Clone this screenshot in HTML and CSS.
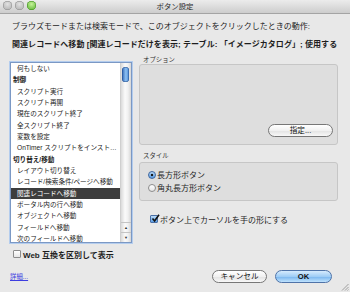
FILE: index.html
```html
<!DOCTYPE html>
<html lang="ja">
<head>
    <meta charset="UTF-8">
    <meta name="viewport" content="width=device-width, initial-scale=1.0">
    <title>ボタン設定</title>
    <link rel="stylesheet" href="styles.css">
</head>
<body>
    <div class="window">
        <div class="titlebar">
            <div class="lights">
                <span class="light"></span>
                <span class="light"></span>
                <span class="light green"></span>
            </div>
            <div class="title">ボタン設定</div>
        </div>

        <div class="content">
            <p class="prompt">ブラウズモードまたは検索モードで、このオブジェクトをクリックしたときの動作:</p>
            <p class="action">関連レコードへ移動 [関連レコードだけを表示; テーブル: 「イメージカタログ」; 使用する</p>

            <div class="main">
                <div class="left">
                    <div class="list">
                        <ul class="items">
                            <li>何もしない</li>
                            <li class="group">制御</li>
                            <li>スクリプト実行</li>
                            <li>スクリプト再開</li>
                            <li>現在のスクリプト終了</li>
                            <li>全スクリプト終了</li>
                            <li>変数を設定</li>
                            <li>OnTimer スクリプトをインスト…</li>
                            <li class="group">切り替え/移動</li>
                            <li>レイアウト切り替え</li>
                            <li>レコード/検索条件/ページへ移動</li>
                            <li class="selected">関連レコードへ移動</li>
                            <li>ポータル内の行へ移動</li>
                            <li>オブジェクトへ移動</li>
                            <li>フィールドへ移動</li>
                            <li>次のフィールドへ移動</li>
                        </ul>
                        <div class="scrollbar">
                            <div class="track"><div class="thumb"></div></div>
                            <div class="arrow up">▲</div>
                            <div class="arrow down">▼</div>
                        </div>
                    </div>
                    <div class="check web"><span class="box"></span>Web 互換を区別して表示</div>
                </div>

                <div class="right">
                    <div class="group-label">オプション</div>
                    <div class="panel options">
                        <button class="btn">指定...</button>
                    </div>
                    <div class="group-label style-label">スタイル</div>
                    <div class="panel style">
                        <div class="radio on"><span class="dot"></span>長方形ボタン</div>
                        <div class="radio"><span class="dot"></span>角丸長方形ボタン</div>
                    </div>
                    <div class="check cursor">
                        <span class="box checked">
                            <svg width="9" height="9" viewBox="0 0 9 9"><path d="M1.5 4.5 L3.6 7 L8 0.8" fill="none" stroke="#111" stroke-width="1.6"/></svg>
                        </span>ボタン上でカーソルを手の形にする
                    </div>
                </div>
            </div>

            <div class="footer">
                <a class="more" href="#">詳細...</a>
                <div class="buttons">
                    <button class="btn cancel">キャンセル</button>
                    <button class="btn default">OK</button>
                </div>
            </div>
        </div>

        <svg class="grip" width="8" height="8" viewBox="0 0 8 8">
            <path d="M7.5 1 L1 7.5 M7.5 4 L4 7.5 M7.5 6.5 L6.5 7.5" stroke="#8a8a8a" stroke-width="0.8"/>
        </svg>
    </div>
</body>
</html>
```

FILE: styles.css
```css
body {
    margin: 0;
    font-family: "Liberation Sans", "Noto Sans CJK JP", sans-serif;
    color: #1e1e1e;
    background: #e8e8e8;
}
.window {
    position: relative;
    width: 350px;
    height: 292px;
    background: #e8e8e8;
    overflow: hidden;
}
.titlebar {
    position: relative;
    height: 14px;
    background: linear-gradient(#ececec, #cdcdcd);
    border-bottom: 1px solid #a4a4a4;
    box-sizing: border-box;
}
.lights {
    display: flex;
    gap: 3px;
    padding: 1px 0 0 3px;
}
.light {
    width: 9px;
    height: 9px;
    border-radius: 50%;
    background: radial-gradient(circle at 50% 35%, #e2e2e2, #a9a9a9);
    box-shadow: inset 0 0 0 0.5px #8c8c8c;
}
.light.green {
    background: radial-gradient(circle at 50% 35%, #c6f29a, #4fae25);
    box-shadow: inset 0 0 0 0.5px #3d8a1c;
}
.title {
    position: absolute;
    top: 0;
    left: 0;
    right: 0;
    text-align: center;
    font-size: 7.4px;
    line-height: 13px;
    color: #2a2a2a;
}
.content {
    padding: 0 12px 0 10px;
}
.prompt {
    margin: 8px 0 0 2px;
    font-size: 8px;
    line-height: 10px;
    white-space: nowrap;
}
.action {
    margin: 8px 0 0 2px;
    font-size: 8px;
    line-height: 10px;
    font-weight: bold;
    white-space: nowrap;
    letter-spacing: 0.05px;
}
.main {
    display: flex;
    gap: 7px;
    margin-top: 6px;
    height: 204px;
}
.left {
    width: 122px;
}
.list {
    display: flex;
    margin-top: 6px;
    height: 181px;
    box-sizing: border-box;
    background: white;
    border: 1px solid #7b98c4;
    box-shadow: 0 0 0 1px #b4cdee;
}
.items {
    flex: 1;
    margin: 0;
    padding: 0;
    list-style: none;
    overflow: hidden;
}
.items li {
    height: 11.33px;
    line-height: 11.33px;
    padding-left: 6px;
    font-size: 6.6px;
    white-space: nowrap;
    overflow: hidden;
    color: #222;
}
.items li.group {
    padding-left: 2px;
    font-weight: bold;
}
.items li.selected {
    background: #3d3d3d;
    color: white;
}
.scrollbar {
    width: 10px;
    display: flex;
    flex-direction: column;
    border-left: 1px solid #cfcfcf;
    background: linear-gradient(to right, #dadada, #fafafa 40%, #f0f0f0 70%, #d6d6d6);
}
.track {
    flex: 1;
    padding: 4px 0 0 1px;
}
.thumb {
    width: 7px;
    height: 15px;
    border-radius: 4px;
    background: linear-gradient(to right, #2f62b3, #8ec2f3 55%, #4a86d4);
    box-shadow: inset 0 0 0 0.5px #24508f;
}
.arrow {
    height: 9px;
    font-size: 4px;
    line-height: 9px;
    text-align: center;
    color: #333;
    border-top: 1px solid #c4c4c4;
}
.check {
    display: flex;
    align-items: center;
    gap: 2px;
    height: 12px;
    font-size: 8px;
}
.check.web {
    margin-top: 5px;
    padding-left: 3px;
    font-weight: bold;
}
.box {
    width: 8px;
    height: 8px;
    box-sizing: border-box;
    border: 1px solid #8c8c8c;
    border-radius: 1px;
    background: linear-gradient(white, #e6e6e6);
    position: relative;
}
.box.checked {
    border-color: #4a6fa6;
    background: linear-gradient(#bcdcf8, #5a9ee6);
}
.box svg {
    position: absolute;
    left: 0;
    top: -2px;
}
.right {
    width: 199px;
}
.group-label {
    height: 8px;
    line-height: 8px;
    font-size: 6.4px;
    padding-left: 4px;
    color: #333;
}
.style-label {
    margin-top: 7px;
}
.panel {
    box-sizing: border-box;
    background: #dedede;
    border: 1px solid #c6c6c6;
    border-radius: 3px;
}
.options {
    height: 81px;
    display: flex;
    justify-content: flex-end;
    align-items: flex-end;
    padding: 0 4px 7px 0;
}
.style {
    margin-top: 2px;
    height: 39px;
    padding: 5px 0 0 8px;
}
.radio {
    display: flex;
    align-items: center;
    gap: 1px;
    height: 13px;
    font-size: 8px;
}
.dot {
    width: 8px;
    height: 8px;
    box-sizing: border-box;
    border-radius: 50%;
    border: 1px solid #8c8c8c;
    background: linear-gradient(white, #e4e4e4);
}
.radio.on .dot {
    border-color: #3f679f;
    background: radial-gradient(circle, #1a1a1a 1.3px, transparent 1.6px), linear-gradient(#b7d8f7, #5b9de3);
}
.check.cursor {
    margin-top: 12px;
    padding-left: 11px;
}
.btn {
    height: 13px;
    padding: 0;
    font-family: inherit;
    font-size: 7.6px;
    line-height: 11px;
    color: #111;
    border: 1px solid #777;
    border-radius: 7px;
    background: linear-gradient(#ffffff, #f1f1f1 50%, #e2e2e2 51%, #f8f8f8);
}
.options .btn {
    width: 65px;
}
.footer {
    display: flex;
    justify-content: space-between;
    align-items: center;
    margin-top: 10px;
}
.more {
    font-size: 6.4px;
    color: #3d3de0;
}
.buttons {
    display: flex;
    gap: 8px;
    margin-right: 6px;
}
.btn.cancel {
    width: 55px;
}
.btn.default {
    width: 57px;
    font-weight: bold;
    border-color: #4f73a8;
    background: linear-gradient(#d6ebfd, #9fcdf6 50%, #77b4ee 51%, #bfe2fd);
}
.grip {
    position: absolute;
    right: 1px;
    bottom: 1px;
}
```
